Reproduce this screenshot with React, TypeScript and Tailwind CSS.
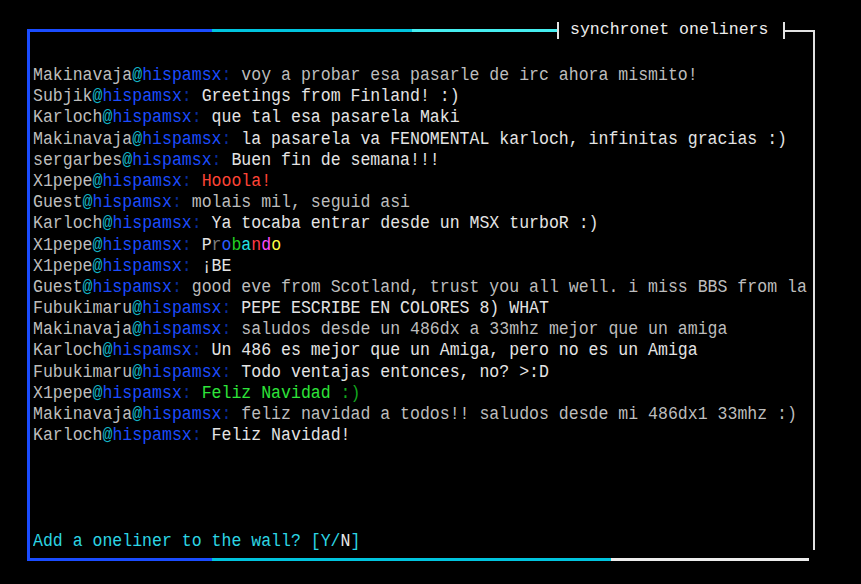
import React from 'react';

type Seg = [string, string];

const W = '#e4e4e4';
const G = '#bdbdbd';

const lines: { user: string; msg: Seg[] }[] = [
  { user: 'Makinavaja', msg: [['voy a probar esa pasarle de irc ahora mismito!', G]] },
  { user: 'Subjik', msg: [['Greetings from Finland! :)', W]] },
  { user: 'Karloch', msg: [['que tal esa pasarela Maki', W]] },
  { user: 'Makinavaja', msg: [['la pasarela va FENOMENTAL karloch, infinitas gracias :)', W]] },
  { user: 'sergarbes', msg: [['Buen fin de semana!!!', W]] },
  { user: 'X1pepe', msg: [['Hooola!', '#ff4436']] },
  { user: 'Guest', msg: [['molais mil, seguid asi', G]] },
  { user: 'Karloch', msg: [['Ya tocaba entrar desde un MSX turboR :)', W]] },
  {
    user: 'X1pepe',
    msg: [
      ['P', W],
      ['r', '#7c7c7c'],
      ['o', '#2a5cff'],
      ['b', '#22d022'],
      ['a', '#22e4e4'],
      ['n', '#ff3a48'],
      ['d', '#ff4cff'],
      ['o', '#ffff44'],
    ],
  },
  { user: 'X1pepe', msg: [['¡BE', W]] },
  { user: 'Guest', msg: [['good eve from Scotland, trust you all well. i miss BBS from la', G]] },
  { user: 'Fubukimaru', msg: [['PEPE ESCRIBE EN COLORES 8) WHAT', W]] },
  { user: 'Makinavaja', msg: [['saludos desde un 486dx a 33mhz mejor que un amiga', G]] },
  { user: 'Karloch', msg: [['Un 486 es mejor que un Amiga, pero no es un Amiga', W]] },
  { user: 'Fubukimaru', msg: [['Todo ventajas entonces, no? >:D', W]] },
  { user: 'X1pepe', msg: [['Feliz Navidad', '#2ee43a'], [' :)', '#12a81e']] },
  { user: 'Makinavaja', msg: [['feliz navidad a todos!! saludos desde mi 486dx1 33mhz :)', G]] },
  { user: 'Karloch', msg: [['Feliz Navidad!', W]] },
];

const Line: React.FC<{ user: string; msg: Seg[] }> = ({ user, msg }) => (
  <div className="h-[21.2px] leading-[21.2px] whitespace-pre scale-y-[1.12]">
    <span className="text-[#bdbdbd]">{user}</span>
    <span className="text-[#14b4c4]">@</span>
    <span className="text-[#1c4cff]">hispamsx</span>
    <span className="text-[#0a2c9c]">:</span>{' '}
    {msg.map(([t, c], i) => (
      <span key={i} style={{ color: c }}>
        {t}
      </span>
    ))}
  </div>
);

export default function App() {
  return (
    <div className="w-[861px] h-[584px] bg-black overflow-hidden font-['Liberation_Mono','DejaVu_Sans_Mono',monospace] text-[16.55px]">
      <div className="ml-[27px] mt-[22px] w-[788px]">
        {/* top border with title */}
        <div className="flex items-center h-[17px]">
          <div className="self-end h-[10px] w-[185px] border-t-[3px] border-l-[3px] border-[#1a4cff]" />
          <div className="h-[3px] w-[200px] bg-[#00c4de]" />
          <div className="h-[3px] w-[145px] bg-[#46eef0]" />
          <div className="w-[2px] h-[17px] bg-[#e2e2e2]" />
          <span className="ml-[11px] text-[#ececec] whitespace-pre leading-none">synchronet oneliners</span>
          <div className="ml-[15px] w-[2px] h-[17px] bg-[#e2e2e2]" />
          <div className="self-end h-[9px] flex-1 border-t-2 border-r-2 border-[#e2e2e2] mt-[8px]" />
        </div>

        {/* body */}
        <div className="flex h-[519px]">
          <div className="w-[3px] bg-[#1a4cff]" />
          <div className="flex-1 flex flex-col pl-[3px] pt-[25px]">
            {lines.map((l, i) => (
              <Line key={i} user={l.user} msg={l.msg} />
            ))}
            <div className="mt-auto mb-[7px] h-[21.2px] leading-[21.2px] whitespace-pre scale-y-[1.12] text-[#2cd6e4]">
              Add a oneliner to the wall? [Y/<span className="text-[#e8e8e8]">N</span>]
            </div>
          </div>
          <div className="w-[2px] bg-[#e2e2e2] mb-[8px]" />
        </div>

        {/* bottom border */}
        <div className="flex h-[3px]">
          <div className="w-[185px] bg-[#1a4cff]" />
          <div className="w-[399px] bg-[#00c4de]" />
          <div className="w-[198px] bg-[#ececec]" />
        </div>
      </div>
    </div>
  );
}
